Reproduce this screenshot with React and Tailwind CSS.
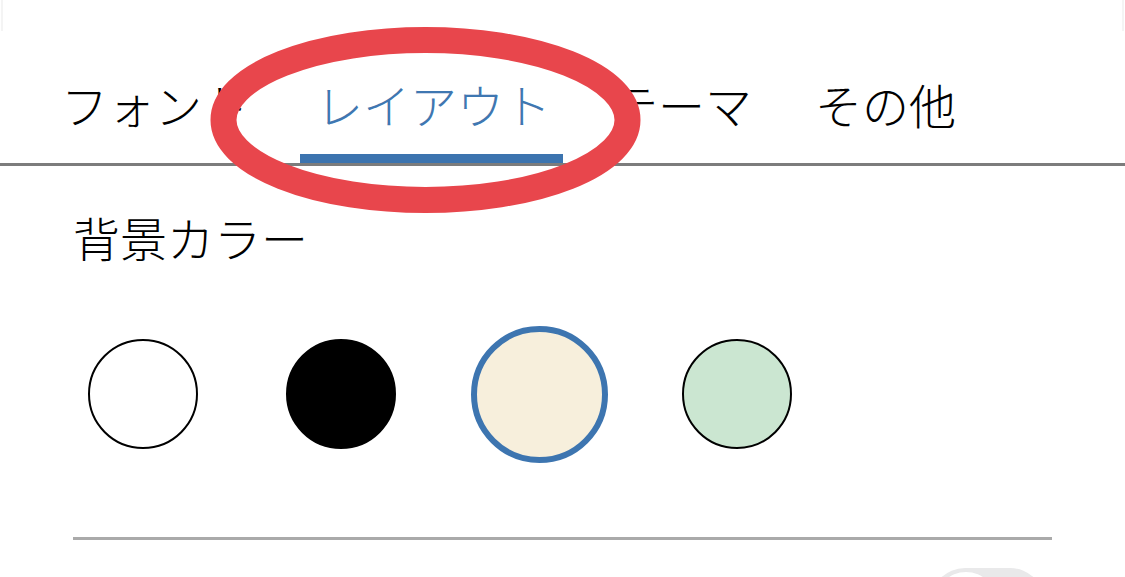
import React from "react";

const tabs = [
  { label: "フォント", active: false, cls: "ml-[45px]" },
  { label: "レイアウト", active: true, cls: "ml-[35px] w-[263px]" },
  { label: "テーマ", active: false, cls: "ml-[32px]" },
  { label: "その他", active: false, cls: "ml-[31px]" },
];

const colors = [
  { fill: "bg-white", selected: false },
  { fill: "bg-black", selected: false },
  { fill: "bg-[#f7efdc]", selected: true },
  { fill: "bg-[#cbe6d1]", selected: false },
];

export default function App() {
  return (
    <div
      className="relative w-[1125px] h-[577px] overflow-hidden bg-white text-black"
      style={{ fontFamily: '"Noto Sans CJK JP", "Noto Sans", sans-serif' }}
    >
      {/* faint top bar */}
      <div className="h-[31px] mx-[1px] border-x-2 border-[#f4f4f4]" />

      {/* tabs */}
      <div className="flex items-end pt-[49px]">
        {tabs.map((t) => (
          <div key={t.label} className={`flex flex-col ${t.cls}`}>
            <div
              className={`pl-[16px] pr-[16px] text-[47px] leading-[47px] font-light whitespace-nowrap ${
                t.active ? "text-[#3f77b1]" : "text-black"
              }`}
            >
              {t.label}
            </div>
            <div
              className={`mt-[27px] h-[9px] ${
                t.active ? "bg-[#3c74af]" : "bg-transparent"
              }`}
            />
          </div>
        ))}
      </div>
      <div className="h-[3px] bg-[#7c7c7c]" />

      {/* section */}
      <div className="pl-[73px]">
        <div className="mt-[47px] text-[47px] leading-[47px] font-light">背景カラー</div>
        <div className="mt-[64px] flex gap-[58px]">
          {colors.map((c, i) => (
            <div key={i} className="w-[140px] h-[140px] flex items-center justify-center">
              {c.selected ? (
                <div className={`w-[137px] h-[137px] rounded-full border-[6px] border-[#3d75b0] ${c.fill}`} />
              ) : (
                <div className={`w-[110px] h-[110px] rounded-full border-2 border-black ${c.fill}`} />
              )}
            </div>
          ))}
        </div>
        <div className="mt-[73px] w-[979px] h-[3px] bg-[#aaaaaa]" />
        <div className="w-[979px] flex justify-end pr-[7px] mt-[28px]">
          <div className="relative w-[115px] h-[70px] rounded-full bg-[#e9e9ea]">
            <div className="absolute left-[5px] top-[4px] w-[62px] h-[62px] rounded-full bg-white shadow-md" />
          </div>
        </div>
      </div>

      {/* red annotation ellipse */}
      <svg
        className="absolute left-0 top-0 pointer-events-none"
        width="1125"
        height="577"
        viewBox="0 0 1125 577"
      >
        <ellipse cx="425.5" cy="120" rx="202" ry="80" fill="none" stroke="#e8464c" strokeWidth="26" />
      </svg>
    </div>
  );
}
